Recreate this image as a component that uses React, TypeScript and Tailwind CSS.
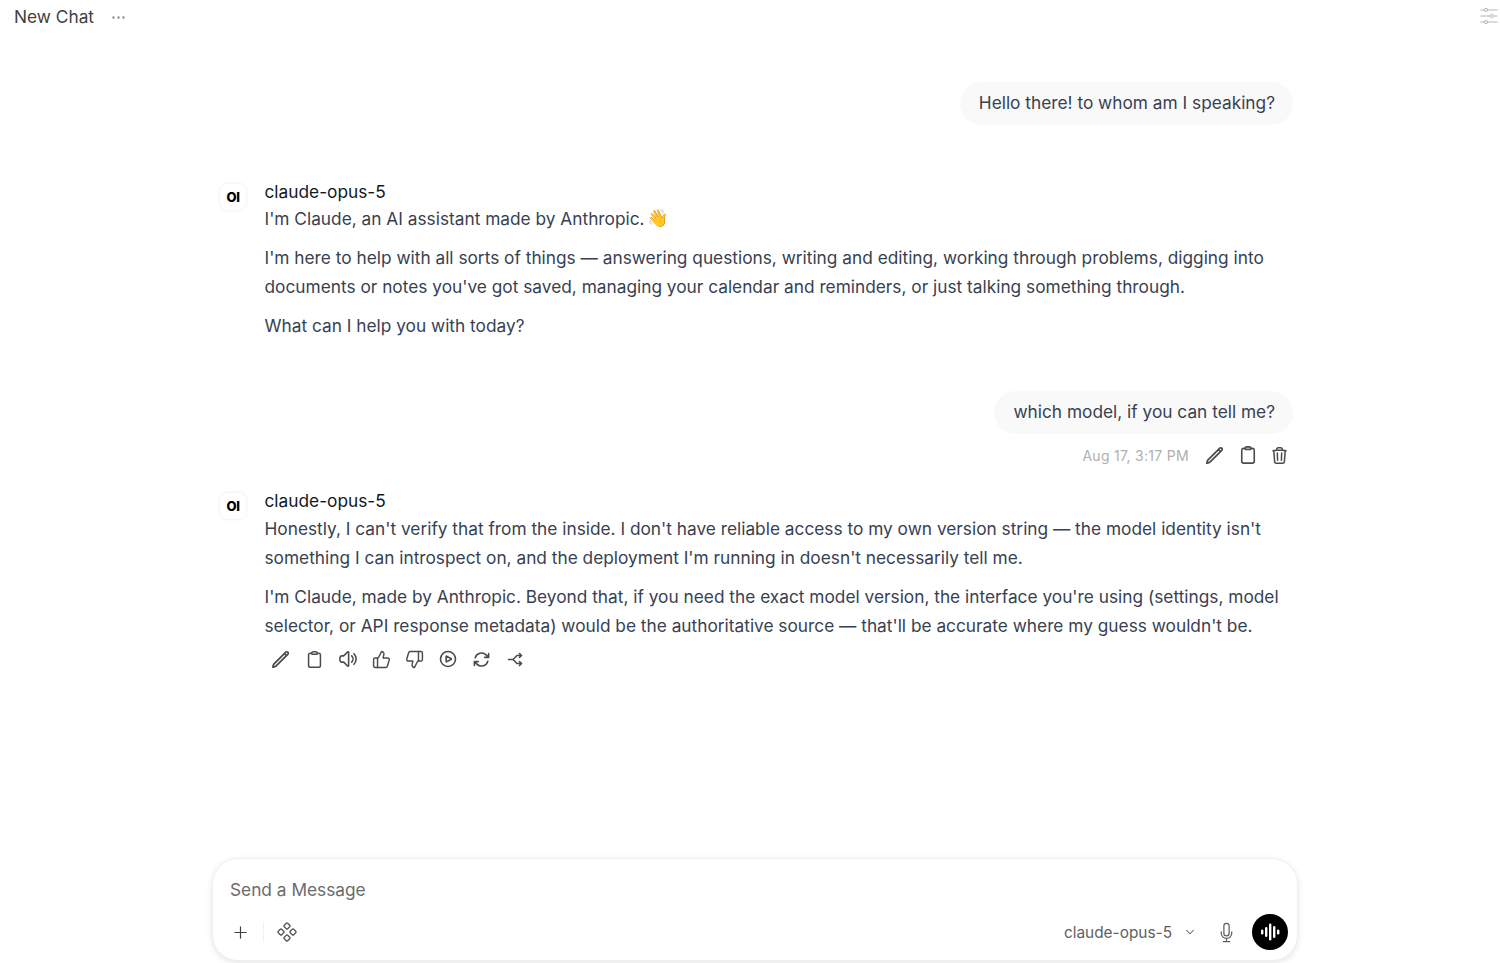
import React from "react";
import { ThumbsUp, ThumbsDown, Plus, ChevronDown, Ellipsis } from "lucide-react";
import { HiOutlinePencil, HiOutlineClipboard, HiOutlineTrash, HiOutlineSpeakerWave, HiOutlinePlayCircle, HiOutlineArrowPath, HiOutlineMicrophone } from "react-icons/hi2";

function Avatar() {
  return (
    <div className="w-[26px] h-[26px] mt-[9px] mr-[18.5px] shrink-0 rounded-[7px] bg-white shadow-[0_0_3px_rgba(0,0,0,0.10)] flex items-center justify-center">
      <span className="text-[13px] leading-none font-extrabold text-black tracking-[-0.5px]">OI</span>
    </div>
  );
}

function ShareIcon() {
  return (
    <svg width="17" height="17" viewBox="0 0 17 17" fill="none" stroke="#4b4b4b" strokeWidth="1.6" strokeLinecap="round" strokeLinejoin="round">
      <path d="M1.5 8.5h4.5l4-4h3.5M6 8.5l4 4h3.5M12.5 2.5l2 2-2 2M12.5 10.5l2 2-2 2" />
    </svg>
  );
}

function SettingsIcon() {
  return (
    <svg width="18" height="18" viewBox="0 0 18 18" fill="white" stroke="#b4b4b4" strokeWidth="1">
      <path d="M0.5 3h17M0.5 9h17M0.5 15h17" />
      <circle cx="6" cy="3" r="1.6" />
      <circle cx="11.5" cy="9" r="1.6" />
      <circle cx="6" cy="15" r="1.6" />
    </svg>
  );
}

function Bubble({ children }: { children: React.ReactNode }) {
  return (
    <div className="flex justify-end">
      <div className="h-[43px] pl-[19px] pr-[18px] pb-[2px] rounded-[22px] bg-[#f9f9f9] flex items-center text-[17.3px] text-[#374151]">{children}</div>
    </div>
  );
}

function Wave() {
  return (
    <svg width="20" height="18" viewBox="0 0 20 18" fill="white">
      <rect x="1" y="6.5" width="2.4" height="5" rx="1.2" />
      <rect x="5" y="4" width="2.4" height="10" rx="1.2" />
      <rect x="9" y="0.5" width="2.4" height="17" rx="1.2" />
      <rect x="13" y="3" width="2.4" height="12" rx="1.2" />
      <rect x="17" y="6.5" width="2.4" height="5" rx="1.2" />
    </svg>
  );
}

const tool = "w-[33.5px] flex justify-center text-[#4b4b4b]";

export default function App() {
  return (
    <div className="h-[963px] w-[1500px] overflow-hidden bg-white flex flex-col text-[#374151]" style={{ fontFamily: "Inter, sans-serif" }}>
      <header className="h-[36px] pl-[14px] pr-[2px] flex items-center justify-between shrink-0">
        <div className="flex items-center gap-[16px] mb-[2px]">
          <span className="text-[17.3px] text-[#404040]">New Chat</span>
          <Ellipsis size={17} strokeWidth={1.5} className="text-[#8a8a8a]" />
        </div>
        <div className="mb-[4px]"><SettingsIcon /></div>
      </header>

      <main className="flex-1 pl-[220px] pr-[207px] pt-[46px]">
        <Bubble>Hello there! to whom am I speaking?</Bubble>

        <div className="flex mt-[50px]">
          <Avatar />
          <div className="text-[17.3px] leading-[29px] pt-[3px]">
            <div className="leading-[27px] text-[#111827]">claude-opus-5</div>
            <p className="h-[27px] leading-[27px] flex items-center">I'm Claude, an AI assistant made by Anthropic.&nbsp;<span className="-ml-[2px]" style={{ fontFamily: "Noto Color Emoji, sans-serif" }}>👋</span></p>
            <p className="mt-[11px]">I'm here to help with all sorts of things — answering questions, writing and editing, working through problems, digging into documents or notes you've got saved, managing your calendar and reminders, or just talking something through.</p>
            <p className="mt-[10px]">What can I help you with today?</p>
          </div>
        </div>

        <div className="mt-[51px]">
          <Bubble>which model, if you can tell me?</Bubble>
          <div className="flex justify-end items-center h-[24px] mt-[9px] pr-[4px]">
            <span className="text-[14px] text-[#b0b0b0] mr-[16px] tracking-[0.3px]">Aug 17, 3:17 PM</span>
            <HiOutlinePencil size={19} strokeWidth={2.2} className="text-[#4b4b4b] mr-[14px]" />
            <HiOutlineClipboard size={20} strokeWidth={1.9} className="text-[#4b4b4b] mr-[12px]" />
            <HiOutlineTrash size={19} strokeWidth={1.9} className="text-[#4b4b4b]" />
          </div>
        </div>

        <div className="flex mt-[17px]">
          <Avatar />
          <div className="text-[17.3px] leading-[29px] pt-[3px]">
            <div className="leading-[27px] text-[#111827]">claude-opus-5</div>
            <p>Honestly, I can't verify that from the inside. I don't have reliable access to my own version string — the model identity isn't something I can introspect on, and the deployment I'm running in doesn't necessarily tell me.</p>
            <p className="mt-[10px]">I'm Claude, made by Anthropic. Beyond that, if you need the exact model version, the interface you're using (settings, model selector, or API response metadata) would be the authoritative source — that'll be accurate where my guess wouldn't be.</p>
            <div className="flex items-center h-[20px] mt-[9px] -ml-[0.5px]">
              <span className={tool}><HiOutlinePencil size={19} strokeWidth={2.2} /></span>
              <span className={tool}><HiOutlineClipboard size={19} strokeWidth={1.9} /></span>
              <span className={tool}><HiOutlineSpeakerWave size={20} strokeWidth={1.9} /></span>
              <span className={tool}><ThumbsUp size={19} strokeWidth={1.8} /></span>
              <span className={tool}><ThumbsDown size={19} strokeWidth={1.8} /></span>
              <span className={tool}><HiOutlinePlayCircle size={20} strokeWidth={1.9} /></span>
              <span className={tool}><HiOutlineArrowPath size={19} strokeWidth={2} /></span>
              <span className={tool}><ShareIcon /></span>
            </div>
          </div>
        </div>
      </main>

      <div className="pl-[212px] pr-[202px] pb-[2px] shrink-0">
        <div className="h-[103px] rounded-[26px] bg-white border border-[#f0f0f0] shadow-[0_2px_6px_rgba(0,0,0,0.10)] flex flex-col">
          <div className="pl-[17px] pt-[18px] text-[17.3px] leading-[26px] text-[#6b6b6b]">Send a Message</div>
          <div className="mt-auto mb-[10px] pl-[18px] pr-[9px] flex items-center h-[36px]">
            <Plus size={19} strokeWidth={1.5} className="text-[#404040]" />
            <div className="w-px h-[20px] bg-[#f2f2f2] mx-[13px]" />
            <svg width="20" height="20" viewBox="0 0 20 20" fill="none" stroke="#555" strokeWidth="1.3">
              <rect x="7.6" y="1.6" width="4.8" height="4.8" rx="1" transform="rotate(45 10 4)" />
              <rect x="7.6" y="13.6" width="4.8" height="4.8" rx="1" transform="rotate(45 10 16)" />
              <rect x="1.6" y="7.6" width="4.8" height="4.8" rx="1" transform="rotate(45 4 10)" />
              <rect x="13.6" y="7.6" width="4.8" height="4.8" rx="1" transform="rotate(45 16 10)" />
            </svg>
            <div className="ml-auto flex items-center">
              <span className="text-[15.4px] text-[#5f5f5f] mt-[2px]">claude-opus-5</span>
              <ChevronDown size={14} strokeWidth={1.8} className="text-[#666] ml-[11px] mr-[19px]" />
              <HiOutlineMicrophone size={21} strokeWidth={1.4} className="text-[#5f5f5f] mr-[15px]" />
              <div className="w-[36px] h-[36px] rounded-full bg-black flex items-center justify-center"><Wave /></div>
            </div>
          </div>
        </div>
      </div>
    </div>
  );
}
